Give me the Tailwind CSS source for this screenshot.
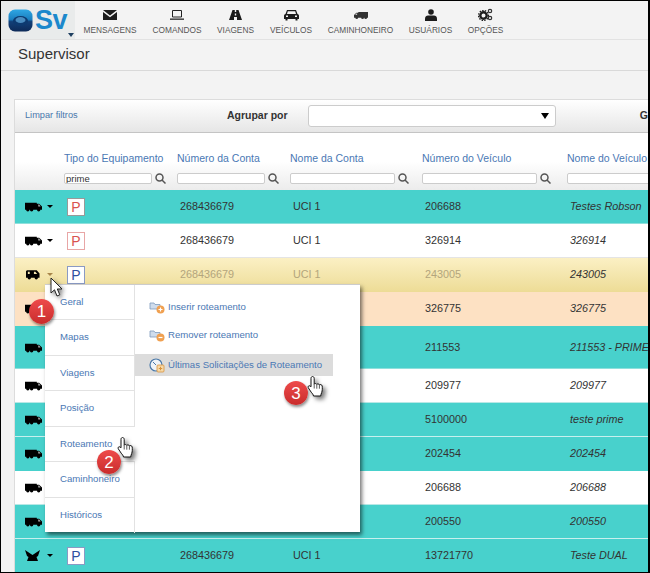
<!DOCTYPE html>
<html lang="pt">
<head>
  <meta charset="UTF-8" />
  <title>Supervisor</title>
  <script src="https://cdn.jsdelivr.net/npm/@tailwindcss/browser@4"></script>
</head>
<body class="font-['Liberation_Sans',Arial,sans-serif] text-[#333]">

  <svg class="hidden">
    <symbol id="truck" viewBox="0 0 18 11">
      <path d="M0 1.500h12.500V2.500h2.500l3 3v3.500H0z"/>
      <path d="M14 3.500h1l1.500 2H14z" fill="#fff" fill-opacity=".7"/>
      <circle cx="3" cy="9" r="1.800"/><circle cx="7" cy="9" r="1.800"/><circle cx="14.500" cy="9" r="1.800"/>
    </symbol>
    <symbol id="van" viewBox="0 0 15 11">
      <path d="M1 1h10.500l3 3.500v4.500H0V2zM8.500 2.500v2.500h3.500l-2-2.500zM2 2.500v2.500h2v-2.500z" fill-rule="evenodd"/>
      <circle cx="3.500" cy="9" r="1.800"/><circle cx="11" cy="9" r="1.800"/>
    </symbol>
    <symbol id="hand" viewBox="0 0 18 24">
      <path d="M5.500 1.500c1 0 1.700.8 1.700 1.800v6c.3-1 2.300-1 2.600.2.400-.9 2.300-.8 2.600.4.500-.6 2.600-.5 2.800 1.100.2 2.300.2 4.500-.5 6.500-.4 1.300-1 2.200-1 3.500H6.500c-.2-1.500-1.200-2.500-2.300-3.800L1.300 12.800c-.9-1.100.5-2.700 1.800-1.800l.9.800V3.300c0-1 .6-1.800 1.500-1.800z" fill="#fff" stroke="#111" stroke-width="1"/>
      <path d="M7.200 9.500v4M9.800 9.700v4M12.400 10.100v3.600" stroke="#111" stroke-width=".7" fill="none"/>
    </symbol>
  </svg>

  <div class="relative w-[650px] h-[573px] overflow-hidden bg-[#f3f3f3] border-t border-l border-r-2 border-b border-black">

    <!-- topo -->
    <header class="flex h-[39px] border-b border-[#e2e2e2] bg-[#f3f3f3]">
      <div class="relative flex items-center w-[74px] h-[38px] bg-[#e9ebeb] pl-[7px] gap-[2px]">
        <svg width="25" height="23" viewBox="0 0 25 23">
          <defs>
            <linearGradient id="logoGrad" x1="0" y1="0" x2="0" y2="1">
              <stop offset="0" stop-color="#2fa7e4"/><stop offset=".45" stop-color="#1b7fc0"/><stop offset=".55" stop-color="#123f78"/><stop offset="1" stop-color="#0d2a58"/>
            </linearGradient>
          </defs>
          <rect x="0.500" y="0.500" width="24" height="22" rx="6.500" fill="url(#logoGrad)"/>
          <ellipse cx="12.500" cy="12" rx="7.500" ry="5" fill="#0d3a70"/>
          <ellipse cx="12.500" cy="11" rx="5" ry="3" fill="#4a8cc0"/>
        </svg>
        <span class="text-[27px] leading-none font-bold text-[#1b88cc] tracking-[-0.5px]">Sv</span>
        <span class="absolute right-[1px] bottom-[2px] w-0 h-0 border-x-[3px] border-t-[4px] border-x-transparent border-t-[#1f3f60]"></span>
      </div>
      <nav class="flex gap-[16px] pl-[8px] text-[8.300px] leading-none text-[#555]">
        <a class="flex flex-col items-center w-[54px]">
          <svg class="mt-[8px] h-[12px]" width="14" height="12" viewBox="0 0 14 12"><path d="M0 1h14L7 6.500zM0 3l7 5.200L14 3v8H0z" fill="#1c1c1c"/></svg>
          <span class="mt-[5px]">MENSAGENS</span>
        </a>
        <a class="flex flex-col items-center w-[48px]">
          <svg class="mt-[8px] h-[12px]" width="14" height="12" viewBox="0 0 14 12"><path d="M2.500 1.500h9v6.500h-9z" fill="none" stroke="#222"/><path d="M0 9.500h14v1.300H0z" fill="#222"/></svg>
          <span class="mt-[5px]">COMANDOS</span>
        </a>
        <a class="flex flex-col items-center w-[37px]">
          <svg class="mt-[8px] h-[12px]" width="13" height="12" viewBox="0 0 13 12"><path d="M3.500 1h2.300v2h1.400V1h2.300L13 11H8v-3H5v3H0zM5.800 4.500h1.400v2H5.800z" fill="#1c1c1c" fill-rule="evenodd"/></svg>
          <span class="mt-[5px]">VIAGENS</span>
        </a>
        <a class="flex flex-col items-center w-[42px]">
          <svg class="mt-[8px] h-[12px]" width="15" height="12" viewBox="0 0 15 12"><path d="M3 1h9l1.500 4c1 .3 1.500 1 1.500 2v3h-1.500v1.500h-2V10h-8v1.500h-2V10H0V7c0-1 .5-1.700 1.500-2zM3.800 2.300 3 5h9l-.8-2.700zM2 6.500v1.500h2V6.500zM11 6.500v1.500h2V6.500z" fill="#1c1c1c" fill-rule="evenodd"/></svg>
          <span class="mt-[5px]">VEÍCULOS</span>
        </a>
        <a class="flex flex-col items-center w-[65px]">
          <svg class="mt-[8px] h-[12px] fill-[#333]" width="14" height="12"><use href="#truck" transform="matrix(-1 0 0 1 14 0)" width="14" height="12"/></svg>
          <span class="mt-[5px]">CAMINHONEIRO</span>
        </a>
        <a class="flex flex-col items-center w-[43px]">
          <svg class="mt-[8px] h-[12px]" width="12" height="12" viewBox="0 0 12 12"><circle cx="6" cy="3" r="2.800" fill="#1c1c1c"/><path d="M0 12V9.500C0 7.500 1.500 6.500 3 6.500h6c1.500 0 3 1 3 3V12z" fill="#1c1c1c"/></svg>
          <span class="mt-[5px]">USUÁRIOS</span>
        </a>
        <a class="flex flex-col items-center w-[35px]">
          <svg class="mt-[7px] h-[13px]" width="15" height="13" viewBox="0 0 15 13"><circle cx="5.500" cy="7.500" r="3.200" fill="none" stroke="#1c1c1c" stroke-width="2.400"/><circle cx="5.500" cy="7.500" r="5" fill="none" stroke="#1c1c1c" stroke-width="1.200" stroke-dasharray="1.500 1.200"/><circle cx="12" cy="3" r="1.700" fill="none" stroke="#333" stroke-width="1.200"/><circle cx="12" cy="10" r="1.700" fill="none" stroke="#333" stroke-width="1.200"/></svg>
          <span class="mt-[5px]">OPÇÕES</span>
        </a>
      </nav>
    </header>

    <!-- titulo -->
    <div class="h-[31px] pl-[17px] pt-[5px] border-b border-[#d9d9d9] text-[15px] leading-[18px] text-[#333]">Supervisor</div>

    <!-- painel -->
    <section class="ml-[13px] mt-[28px] border-t border-l border-[#dcdcdc] bg-white">
      <div class="flex items-center h-[33px] pl-[10px] border-b border-[#c4c4c4] bg-gradient-to-b from-white to-[#e6e6e6] whitespace-nowrap">
        <a class="w-[202px] text-[9.200px] text-[#4a78ac]">Limpar filtros</a>
        <span class="w-[81px] text-[10.500px] font-bold text-[#333]">Agrupar por</span>
        <div class="flex items-center justify-end w-[248px] h-[22px] pr-[6px] bg-white border border-[#ccc] rounded-[3px]">
          <span class="w-0 h-0 border-x-[4px] border-t-[6px] border-x-transparent border-t-black"></span>
        </div>
        <span class="ml-[84px] text-[10.500px] font-bold text-[#333]">G</span>
      </div>

      <table class="table-fixed w-[760px] border-separate border-spacing-0 text-[10.800px]">
        <colgroup>
          <col class="w-[49px]"><col class="w-[113px]"><col class="w-[113px]"><col class="w-[132px]"><col class="w-[145px]"><col>
        </colgroup>
        <thead class="text-left text-[#4a78b4] font-normal text-[10.500px]">
          <tr class="h-[57px] bg-gradient-to-b from-white via-white to-[#ececec] align-bottom">
            <th></th>
            <th class="font-normal pb-[6px] whitespace-nowrap">
              <div class="leading-[13px] mb-[8px]">Tipo do Equipamento</div>
              <div class="flex items-center gap-[3px]">
                <input value="prime" class="w-[88px] h-[11px] px-[1px] bg-white border border-[#ccc] rounded-[2px] text-[9.500px] text-[#333] leading-none">
                <svg width="11" height="11" viewBox="0 0 11 11" fill="none" stroke="#555" stroke-width="1.500"><circle cx="4.500" cy="4.500" r="3.500"/><path d="M7 7l3.500 3.500"/></svg>
              </div>
            </th>
            <th class="font-normal pb-[6px] whitespace-nowrap">
              <div class="leading-[13px] mb-[8px]">Número da Conta</div>
              <div class="flex items-center gap-[3px]">
                <input class="w-[88px] h-[11px] bg-white border border-[#ccc] rounded-[2px]">
                <svg width="11" height="11" viewBox="0 0 11 11" fill="none" stroke="#555" stroke-width="1.500"><circle cx="4.500" cy="4.500" r="3.500"/><path d="M7 7l3.500 3.500"/></svg>
              </div>
            </th>
            <th class="font-normal pb-[6px] whitespace-nowrap">
              <div class="leading-[13px] mb-[8px]">Nome da Conta</div>
              <div class="flex items-center gap-[3px]">
                <input class="w-[105px] h-[11px] bg-white border border-[#ccc] rounded-[2px]">
                <svg width="11" height="11" viewBox="0 0 11 11" fill="none" stroke="#555" stroke-width="1.500"><circle cx="4.500" cy="4.500" r="3.500"/><path d="M7 7l3.500 3.500"/></svg>
              </div>
            </th>
            <th class="font-normal pb-[6px] whitespace-nowrap">
              <div class="leading-[13px] mb-[8px]">Número do Veículo</div>
              <div class="flex items-center gap-[3px]">
                <input class="w-[115px] h-[11px] bg-white border border-[#ccc] rounded-[2px]">
                <svg width="11" height="11" viewBox="0 0 11 11" fill="none" stroke="#555" stroke-width="1.500"><circle cx="4.500" cy="4.500" r="3.500"/><path d="M7 7l3.500 3.500"/></svg>
              </div>
            </th>
            <th class="font-normal pb-[6px] whitespace-nowrap">
              <div class="leading-[13px] mb-[8px]">Nome do Veículo</div>
              <div class="flex items-center gap-[3px]">
                <input class="w-[115px] h-[11px] bg-white border border-[#ccc] rounded-[2px]">
              </div>
            </th>
          </tr>
        </thead>
        <tbody class="[&_td]:border-b [&_td:nth-child(n+3)]:pl-[3px] [&_td:nth-child(6)]:italic [&_td:nth-child(6)]:whitespace-nowrap">
          <tr class="h-[34px] bg-[#48d1cc]">
            <td class="border-[#8fe0dc]"><div class="flex items-center pl-[10px] gap-[5px]"><svg class="w-[17px] h-[11px]"><use href="#truck"/></svg><span class="w-0 h-0 border-x-[3px] border-t-[3px] border-x-transparent border-t-black"></span></div></td>
            <td class="border-[#8fe0dc]"><span class="flex items-center justify-center ml-[3px] w-[18px] h-[18px] bg-white border border-[#999] text-[#d9534f] text-[14px] leading-none">P</span></td>
            <td class="border-[#8fe0dc]">268436679</td><td class="border-[#8fe0dc]">UCI 1</td><td class="border-[#8fe0dc]">206688</td><td class="border-[#8fe0dc]">Testes Robson</td>
          </tr>
          <tr class="h-[34px] bg-white">
            <td class="border-[#e4e4e4]"><div class="flex items-center pl-[10px] gap-[5px]"><svg class="w-[17px] h-[11px]"><use href="#truck"/></svg><span class="w-0 h-0 border-x-[3px] border-t-[3px] border-x-transparent border-t-black"></span></div></td>
            <td class="border-[#e4e4e4]"><span class="flex items-center justify-center ml-[3px] w-[18px] h-[18px] bg-white border border-[#e8a6a6] text-[#d9534f] text-[14px] leading-none">P</span></td>
            <td class="border-[#e4e4e4]">268436679</td><td class="border-[#e4e4e4]">UCI 1</td><td class="border-[#e4e4e4]">326914</td><td class="border-[#e4e4e4]">326914</td>
          </tr>
          <tr class="h-[34px] bg-gradient-to-b from-[#fbf0c4] to-[#eddc96] text-[#b3a57c]">
            <td class="border-[#eddc96]"><div class="flex items-center pl-[11px] gap-[7px]"><svg class="w-[14px] h-[11px] fill-black"><use href="#van"/></svg><span class="w-0 h-0 border-x-[3px] border-t-[3px] border-x-transparent border-t-[#a8864a]"></span></div></td>
            <td class="border-[#eddc96]"><span class="flex items-center justify-center ml-[3px] w-[18px] h-[18px] bg-white border border-[#8a9ac4] text-[#2f4f9f] text-[14px] leading-none">P</span></td>
            <td class="border-[#eddc96]">268436679</td><td class="border-[#eddc96]">UCI 1</td><td class="border-[#eddc96]">243005</td><td class="border-[#eddc96] text-[#333]">243005</td>
          </tr>
          <tr class="h-[34px] bg-[#fde1c3]">
            <td class="border-[#fde1c3]"><div class="flex items-center pl-[10px] gap-[5px]"><svg class="w-[17px] h-[11px]"><use href="#truck"/></svg></div></td>
            <td class="border-[#fde1c3]"></td>
            <td class="border-[#fde1c3]">268436679</td><td class="border-[#fde1c3]">UCI 1</td><td class="border-[#fde1c3]">326775</td><td class="border-[#fde1c3]">326775</td>
          </tr>
          <tr class="h-[43px] bg-[#48d1cc]">
            <td class="border-[#8fe0dc]"><div class="flex items-center pl-[10px] gap-[5px]"><svg class="w-[17px] h-[11px]"><use href="#truck"/></svg></div></td>
            <td class="border-[#8fe0dc]"></td>
            <td class="border-[#8fe0dc]">268436679</td><td class="border-[#8fe0dc]">UCI 1</td><td class="border-[#8fe0dc]">211553</td><td class="border-[#8fe0dc]">211553 - PRIME</td>
          </tr>
          <tr class="h-[34px] bg-white">
            <td class="border-[#b8e8e6]"><div class="flex items-center pl-[10px] gap-[5px]"><svg class="w-[17px] h-[11px]"><use href="#truck"/></svg></div></td>
            <td class="border-[#b8e8e6]"></td>
            <td class="border-[#b8e8e6]">268436679</td><td class="border-[#b8e8e6]">UCI 1</td><td class="border-[#b8e8e6]">209977</td><td class="border-[#b8e8e6]">209977</td>
          </tr>
          <tr class="h-[34px] bg-[#48d1cc]">
            <td class="border-[#c8f0ee]"><div class="flex items-center pl-[10px] gap-[5px]"><svg class="w-[17px] h-[11px]"><use href="#truck"/></svg></div></td>
            <td class="border-[#c8f0ee]"></td>
            <td class="border-[#c8f0ee]">268436679</td><td class="border-[#c8f0ee]">UCI 1</td><td class="border-[#c8f0ee]">5100000</td><td class="border-[#c8f0ee]">teste prime</td>
          </tr>
          <tr class="h-[34px] bg-[#48d1cc]">
            <td class="border-[#48d1cc]"><div class="flex items-center pl-[10px] gap-[5px]"><svg class="w-[17px] h-[11px]"><use href="#truck"/></svg></div></td>
            <td class="border-[#48d1cc]"></td>
            <td class="border-[#48d1cc]">268436679</td><td class="border-[#48d1cc]">UCI 1</td><td class="border-[#48d1cc]">202454</td><td class="border-[#48d1cc]">202454</td>
          </tr>
          <tr class="h-[34px] bg-white">
            <td class="border-[#b8e8e6]"><div class="flex items-center pl-[10px] gap-[5px]"><svg class="w-[17px] h-[11px]"><use href="#truck"/></svg></div></td>
            <td class="border-[#b8e8e6]"></td>
            <td class="border-[#b8e8e6]">268436679</td><td class="border-[#b8e8e6]">UCI 1</td><td class="border-[#b8e8e6]">206688</td><td class="border-[#b8e8e6]">206688</td>
          </tr>
          <tr class="h-[34px] bg-[#48d1cc]">
            <td class="border-[#c8f0ee]"><div class="flex items-center pl-[10px] gap-[5px]"><svg class="w-[17px] h-[11px]"><use href="#truck"/></svg></div></td>
            <td class="border-[#c8f0ee]"></td>
            <td class="border-[#c8f0ee]">268436679</td><td class="border-[#c8f0ee]">UCI 1</td><td class="border-[#c8f0ee]">200550</td><td class="border-[#c8f0ee]">200550</td>
          </tr>
          <tr class="h-[34px] bg-[#48d1cc]">
            <td class="border-[#48d1cc]"><div class="flex items-center pl-[10px] gap-[5px]">
              <svg class="w-[15px] h-[13px]" viewBox="0 0 15 13"><path d="M0 1l7.500 5L15 1l-2 6-1.500 1 1.500 4H2l1.500-4L2 7z"/></svg><span class="w-0 h-0 ml-[2px] border-x-[3px] border-t-[3px] border-x-transparent border-t-black"></span></div></td>
            <td class="border-[#48d1cc]"><span class="flex items-center justify-center ml-[3px] w-[18px] h-[18px] bg-white border border-[#8a9ac4] text-[#2f4f9f] text-[14px] leading-none">P</span></td>
            <td class="border-[#48d1cc]">268436679</td><td class="border-[#48d1cc]">UCI 1</td><td class="border-[#48d1cc]">13721770</td><td class="border-[#48d1cc]">Teste DUAL</td>
          </tr>
        </tbody>
      </table>
    </section>

    <!-- menu aberto -->
    <div class="absolute left-[44px] top-[283px] flex w-[315px] h-[248px] bg-white border-t border-[#ccc] shadow-[2px_3px_4px_rgba(0,0,0,0.55)] text-[9.600px] text-[#4a78b4]">
      <ul class="w-[90px] shrink-0">
        <li class="h-[35px] flex items-center pl-[15px] border-b border-r border-[#e2e2e2]">Geral</li>
        <li class="h-[36px] flex items-center pl-[15px] border-b border-r border-[#e2e2e2]">Mapas</li>
        <li class="h-[35px] flex items-center pl-[15px] border-b border-r border-[#e2e2e2]">Viagens</li>
        <li class="h-[36px] flex items-center pl-[15px] border-b border-r border-[#e2e2e2]">Posição</li>
        <li class="h-[35px] flex items-center pl-[15px] border-b border-[#e2e2e2]">Roteamento</li>
        <li class="h-[36px] flex items-center pl-[15px] border-b border-r border-[#e2e2e2]">Caminhoneiro</li>
        <li class="h-[35px] flex items-center pl-[15px] border-r border-[#e2e2e2]">Históricos</li>
      </ul>
      <ul class="flex-1 pt-[11px]">
        <li class="flex items-center w-[198px] h-[22px] pl-[14px] gap-[3px]">
          <svg width="16" height="14" viewBox="0 0 16 14"><path d="M1 3h4l1 1.500h5V9H1z" fill="#cfdcec" stroke="#7f9bbd" stroke-width=".8"/><circle cx="11.500" cy="9.500" r="4" fill="#f0a050"/><path d="M9.500 9.500h4M11.500 7.500v4" stroke="#fff" stroke-width="1.200"/></svg>
          <span>Inserir roteamento</span>
        </li>
        <li class="flex items-center w-[198px] h-[22px] mt-[6px] pl-[14px] gap-[3px]">
          <svg width="16" height="14" viewBox="0 0 16 14"><path d="M1 3h4l1 1.500h5V9H1z" fill="#cfdcec" stroke="#7f9bbd" stroke-width=".8"/><circle cx="11.500" cy="9.500" r="4" fill="#f0a050"/><path d="M9.500 9.500h4" stroke="#fff" stroke-width="1.200"/></svg>
          <span>Remover roteamento</span>
        </li>
        <li class="flex items-center w-[198px] h-[22px] mt-[8px] pl-[14px] gap-[3px] bg-[#dcdcdc] whitespace-nowrap">
          <svg class="shrink-0" width="16" height="16" viewBox="0 0 16 16"><circle cx="7" cy="8" r="6" fill="#eef3f8" stroke="#4a78a8" stroke-width="1.200"/><path d="M7 8L4 5" stroke="#4a78a8"/><rect x="8" y="8" width="7" height="7" rx="1" fill="#f6d9a8" stroke="#d8923c" stroke-width=".8"/><path d="M9.800 11.500h3.400M11.500 9.800v3.400" stroke="#d8923c"/></svg>
          <span>Últimas Solicitações de Roteamento</span>
        </li>
      </ul>
    </div>

    <!-- marcadores do tutorial -->
    <span class="absolute left-[28px] top-[298px] flex items-center justify-center w-[25px] h-[25px] rounded-full bg-gradient-to-b from-[#ee4b4b] to-[#c92c2c] shadow-[1px_2px_3px_rgba(0,0,0,0.45)] text-white text-[17px] leading-none">1</span>
    <span class="absolute left-[96px] top-[449px] flex items-center justify-center w-[24px] h-[24px] rounded-full bg-gradient-to-b from-[#ee4b4b] to-[#c92c2c] shadow-[1px_2px_3px_rgba(0,0,0,0.45)] text-white text-[17px] leading-none">2</span>
    <span class="absolute left-[283px] top-[380px] flex items-center justify-center w-[24px] h-[24px] rounded-full bg-gradient-to-b from-[#ee4b4b] to-[#c92c2c] shadow-[1px_2px_3px_rgba(0,0,0,0.45)] text-white text-[17px] leading-none">3</span>

    <!-- cursores -->
    <svg class="absolute left-[49px] top-[276px] drop-shadow-[2px_2px_2px_rgba(0,0,0,0.5)]" width="14" height="21" viewBox="0 0 14 21"><path d="M1 1v15l3.500-3.200L7 19l2.800-1.200-2.500-5.800H12z" fill="#fff" stroke="#222"/></svg>
    <svg class="absolute left-[116px] top-[435px] drop-shadow-[3px_3px_2px_rgba(0,0,0,0.5)]" width="18" height="24"><use href="#hand"/></svg>
    <svg class="absolute left-[306px] top-[374px] drop-shadow-[3px_3px_2px_rgba(0,0,0,0.5)]" width="18" height="24"><use href="#hand"/></svg>
  </div>
</body>
</html>
